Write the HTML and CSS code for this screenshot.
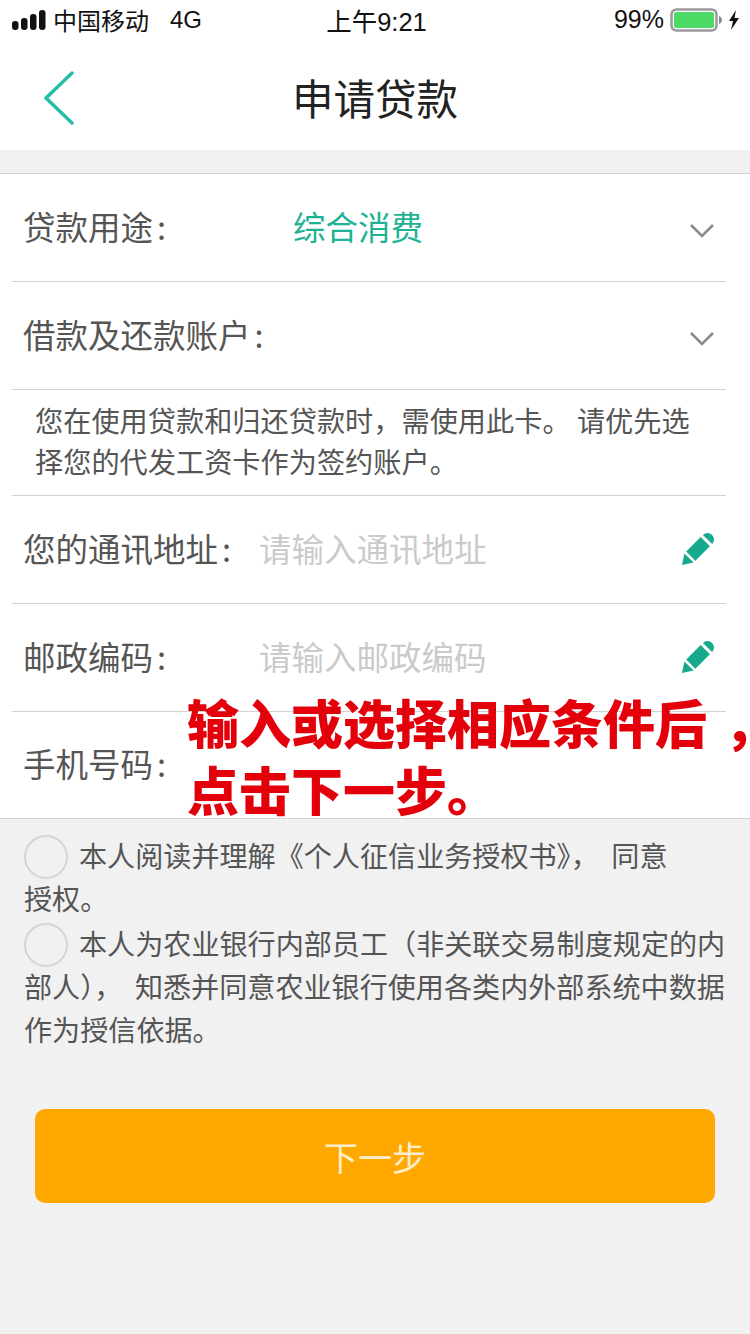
FILE: index.html
```html
<!DOCTYPE html>
<html lang="zh-CN">
<head>
  <meta charset="UTF-8" />
  <meta name="viewport" content="width=device-width, initial-scale=1.0"/>
  <title>申请贷款</title>
  <link rel="stylesheet" href="styles.css">
</head>
<body>

  <!-- Status bar -->
  <div class="status-bar">
    <div class="status-left">
      <svg class="signal" width="34" height="20" viewBox="0 0 34 20">
        <rect x="0" y="11" width="6.500" height="9" rx="3" fill="#111"/>
        <rect x="9" y="8" width="6.500" height="12" rx="3" fill="#111"/>
        <rect x="18" y="4" width="6.500" height="16" rx="3" fill="#111"/>
        <rect x="27" y="0" width="6.500" height="20" rx="3" fill="#111"/>
      </svg>
      <span>中国移动</span>
      <span class="network">4G</span>
    </div>
    <div class="status-time">上午9:21</div>
    <div class="status-right">
      <span>99%</span>
      <svg class="battery" width="52" height="24" viewBox="0 0 52 24">
        <rect x="1.500" y="1.500" width="45" height="21" rx="5" fill="#fff" stroke="#999" stroke-width="2.500"/>
        <rect x="4" y="4" width="40" height="16" rx="2.500" fill="#4cd964"/>
        <path d="M49 8c2 1 3 2.500 3 4s-1 3-3 4z" fill="#888"/>
      </svg>
      <svg width="12" height="20" viewBox="0 0 12 20">
        <path d="M8 0 1 11h4l-2 9 8-12H6.500z" fill="#111"/>
      </svg>
    </div>
  </div>

  <!-- Nav bar -->
  <header class="nav-bar">
    <svg class="back" width="32" height="54" viewBox="0 0 32 54">
      <path d="M29 2 3 27l26 25" fill="none" stroke="#26bfa5" stroke-width="3.500" stroke-linecap="round" stroke-linejoin="round"/>
    </svg>
    <h1>申请贷款</h1>
  </header>

  <!-- Form -->
  <div class="form">
    <div class="row">
      <span class="label label-short">贷款用途<span class="colon">:</span></span>
      <span class="value">综合消费</span>
      <svg class="chevron" width="26" height="16" viewBox="0 0 26 16">
        <path d="M2 2l11 11L24 2" fill="none" stroke="#8a8a8a" stroke-width="2.500"/>
      </svg>
    </div>
    <div class="row">
      <span class="label">借款及还款账户<span class="colon">:</span></span>
      <svg class="chevron" width="26" height="16" viewBox="0 0 26 16">
        <path d="M2 2l11 11L24 2" fill="none" stroke="#8a8a8a" stroke-width="2.500"/>
      </svg>
    </div>
    <div class="note">您在使用贷款和归还贷款时，需使用此卡。 请优先选择您的代发工资卡作为签约账户。</div>
    <div class="row">
      <span class="label label-long">您的通讯地址<span class="colon">:</span></span>
      <span class="placeholder">请输入通讯地址</span>
      <svg class="pencil" width="34" height="34" viewBox="0 0 34 34">
        <path d="M1 33 3.400 21.400 12.600 30.600z" fill="#17a98c"/>
        <path d="M5.200 19.600 19.700 5.100 28.900 14.300 14.400 28.800z" fill="#17a98c"/>
        <path d="M21.900 2.900 31.100 12.100A6.500 6.500 0 0 0 21.900 2.900z" fill="#17a98c"/>
      </svg>
    </div>
    <div class="row">
      <span class="label label-long">邮政编码<span class="colon">:</span></span>
      <span class="placeholder">请输入邮政编码</span>
      <svg class="pencil" width="34" height="34" viewBox="0 0 34 34">
        <path d="M1 33 3.400 21.400 12.600 30.600z" fill="#17a98c"/>
        <path d="M5.200 19.600 19.700 5.100 28.900 14.300 14.400 28.800z" fill="#17a98c"/>
        <path d="M21.900 2.900 31.100 12.100A6.500 6.500 0 0 0 21.900 2.900z" fill="#17a98c"/>
      </svg>
    </div>
    <div class="row row-last">
      <span class="label">手机号码<span class="colon">:</span></span>
    </div>
  </div>

  <!-- Consent -->
  <div class="consent">
    <p><span class="radio"></span>本人阅读并理解《个人征信业务授权书》，&nbsp;&nbsp;同意<br>授权。</p>
    <p><span class="radio"></span>本人为农业银行内部员工（非关联交易制度规定的内部人），&nbsp;&nbsp;知悉并同意农业银行使用各类内外部系统中数据作为授信依据。</p>
  </div>

  <button class="next-btn">下一步</button>

  <!-- Red annotation over the screenshot -->
  <div class="annotation">输入或选择相应条件后<span class="comma">，</span><br>点击下一步。</div>

</body>
</html>
```

FILE: styles.css
```css
:root {
  --green: #1db394;
  --line: #d2d2d4;
  --background: #f1f1f2;
}

* {
  box-sizing: border-box;
}

body {
  margin: 0;
  width: 750px;
  height: 1334px;
  overflow: hidden;
  position: relative;
  font-family: "Noto Sans CJK SC", "Noto Sans", sans-serif;
  background-color: var(--background);
  color: #555;
}

.status-bar {
  height: 44px;
  background: white;
  color: #111;
  display: flex;
  align-items: center;
  justify-content: space-between;
  padding: 0 10px 5px 12px;
  font-size: 24px;
  position: relative;
}

.status-left {
  display: flex;
  align-items: center;
  gap: 7px;
}

.network {
  margin-left: 14px;
  font-family: "Liberation Sans", sans-serif;
}

.status-time {
  position: absolute;
  left: 3px;
  right: 0;
  text-align: center;
  font-family: "Liberation Sans", "Noto Sans CJK SC", sans-serif;
  font-size: 25.500px;
}

.status-right {
  display: flex;
  align-items: center;
  gap: 6px;
  font-family: "Liberation Sans", sans-serif;
  font-size: 25px;
}

.battery {
  margin-top: 1px;
}

.nav-bar {
  height: 106px;
  background: white;
  display: flex;
  align-items: center;
  justify-content: center;
  position: relative;
}

.nav-bar h1 {
  margin: 0;
  font-size: 41.500px;
  font-weight: 400;
  color: #222;
}

.back {
  position: absolute;
  left: 43px;
  top: 27px;
}

.form {
  margin-top: 23px;
  height: 646px;
  background: white;
  border-top: 1px solid var(--line);
  border-bottom: 1px solid var(--line);
  padding: 0 24px 0 12px;
}

.row {
  height: 108px;
  border-bottom: 1px solid var(--line);
  display: flex;
  align-items: center;
  padding: 0 11px 4px 11px;
  font-size: 32.500px;
}

.row-last {
  border-bottom: none;
  padding-bottom: 8px;
}

.label {
  color: #555;
}

.colon {
  margin-left: 4px;
}

.label-short {
  width: 270px;
}

.label-long {
  width: 236px;
}

.value {
  color: var(--green);
}

.placeholder {
  color: #cacaca;
}

.chevron {
  margin-left: auto;
  margin-top: 10px;
}

.pencil {
  margin-left: auto;
  margin-top: 2px;
}

.note {
  height: 106px;
  border-bottom: 1px solid var(--line);
  padding: 9px 24px 0 23px;
  font-size: 28.200px;
  line-height: 41px;
  color: #555;
}

.consent {
  padding: 14px 24px 0;
  font-size: 28.100px;
  line-height: 43px;
  color: #555;
}

.consent p {
  margin: 0 0 2px;
}

.radio {
  display: inline-block;
  width: 44px;
  height: 44px;
  margin: -4px 11px -4px 0;
  border: 2px solid #d4d4d4;
  border-radius: 50%;
  vertical-align: -8px;
}

.next-btn {
  display: block;
  width: 680px;
  height: 94px;
  margin: 59px 0 0 35px;
  border: none;
  border-radius: 10px;
  background: #ffa800;
  color: #fdeecb;
  font-family: inherit;
  font-size: 34px;
}

.annotation {
  position: absolute;
  left: 187px;
  top: 688px;
  font-size: 52px;
  line-height: 67px;
  font-weight: 900;
  color: #e3000b;
  white-space: nowrap;
}

/* half-width comma so the line stays inside the window */
.comma {
  margin-left: 17px;
  font-feature-settings: "halt";
}
```
